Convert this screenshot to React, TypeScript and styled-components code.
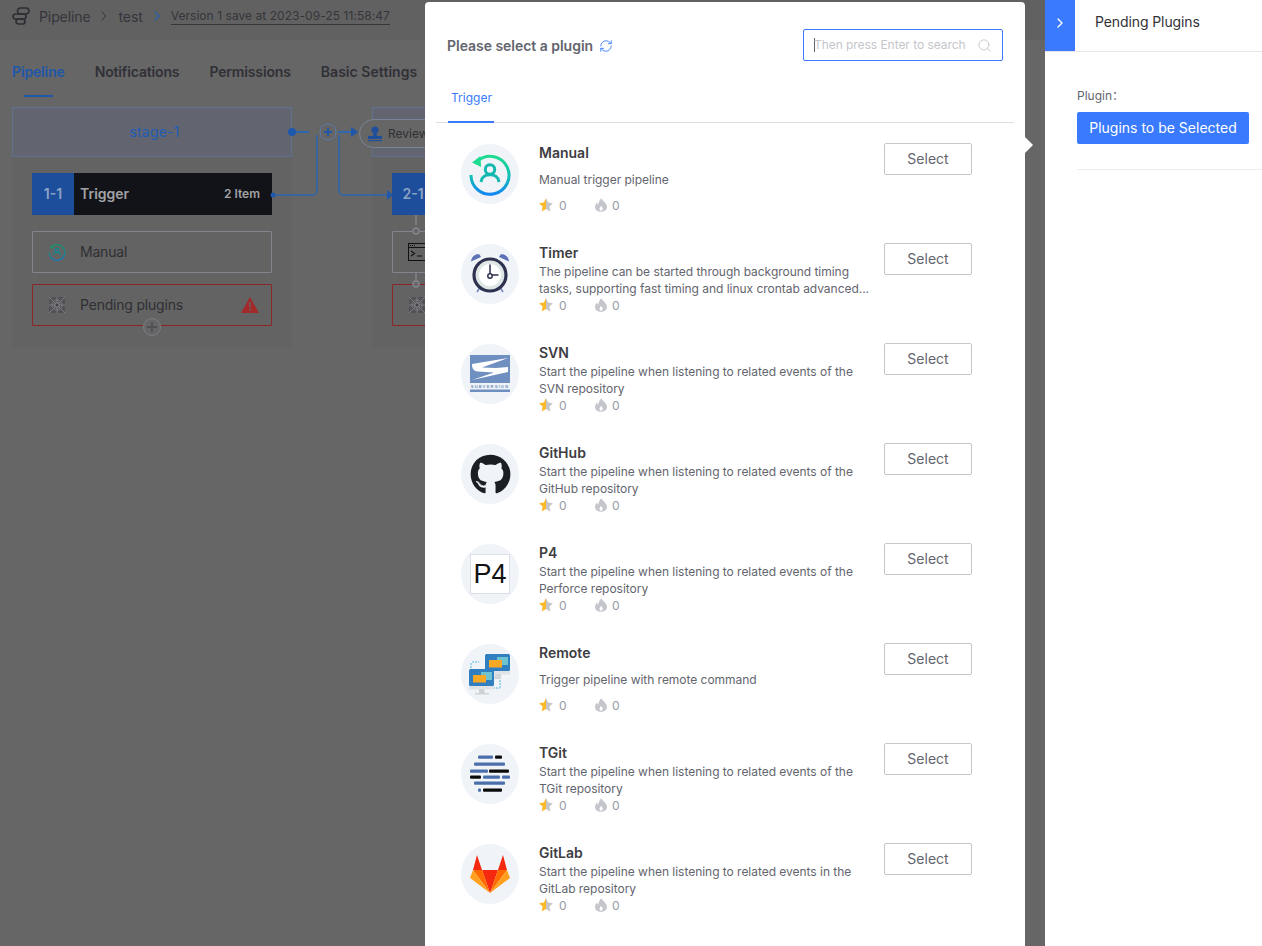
import React from "react";
import styled, { createGlobalStyle } from "styled-components";
import { FaGithub } from "react-icons/fa";
import { ChevronRight, RefreshCw, Search } from "lucide-react";

const GlobalStyle = createGlobalStyle`
  html, body {
    margin: 0;
    height: 100%;
    background: #666;
    overflow: hidden;
    font-family: Inter, "Noto Sans", "Liberation Sans", sans-serif;
  }
  * { box-sizing: border-box; }
`;

const Screen = styled.div`
  position: relative;
  width: 100vw;
  height: 100vh;
  overflow: hidden;
  background: #666;
`;

/* dimmed page behind the modal */
const TopBar = styled.div`
  display: flex;
  align-items: center;
  height: 40px;
  padding: 0 0 8px 12px;
  background: #616161;
  color: #35353b;
  font-size: 14px;
  letter-spacing: -0.1px;
`;
const Crumb = styled.span`
  margin-left: 9px;
`;
const Sep = styled.span<{ $blue?: boolean }>`
  display: flex;
  width: 28px;
  justify-content: center;
  color: ${(p) => (p.$blue ? "#2a5fae" : "#35353b")};
`;
const Version = styled.span`
  font-size: 12px;
  line-height: 16px;
  letter-spacing: 0.05px;
  color: #35353b;
  border-bottom: 1px solid #35353b;
`;
const Tabs = styled.div`
  display: flex;
  gap: 30px;
  height: 57px;
  padding: 21px 12px 0;
`;
const Tab = styled.div<{ $active?: boolean }>`
  position: relative;
  height: 36px;
  font-size: 14px;
  line-height: 22px;
  font-weight: 600;
  letter-spacing: -0.15px;
  color: ${(p) => (p.$active ? "#1f57ab" : "#303036")};
  &:last-child {
    letter-spacing: 0.05px;
  }
  ${(p) =>
    p.$active &&
    `&::after {
      content: "";
      position: absolute;
      left: 12px;
      right: 12px;
      bottom: 0;
      height: 2px;
      background: #1f57ab;
    }`}
`;
const Canvas = styled.div`
  position: relative;
  display: flex;
  gap: 80px;
  padding: 10px 12px;
`;
const Stage = styled.div`
  flex: none;
  width: 280px;
  height: 241px;
  background: #636363;
`;
const StageHead = styled.div`
  display: flex;
  align-items: center;
  justify-content: center;
  height: 50px;
  padding: 0 0 1px 5px;
  background: #62656f;
  border: 1px solid #60728e;
  color: #1f5cb8;
  font-size: 14px;
  letter-spacing: 0.2px;
`;
const Job = styled.div`
  padding: 16px 20px 0;
`;
const JobHead = styled.div`
  display: flex;
  align-items: center;
  height: 42px;
  background: #121318;
  color: #a3a3a6;
  font-size: 14px;
  font-weight: 600;
`;
const Seq = styled.div`
  display: flex;
  align-items: center;
  justify-content: center;
  width: 42px;
  height: 42px;
  margin-right: 6px;
  padding-bottom: 1px;
  background: #1d4e9c;
  color: #8da3c4;
`;
const JobName = styled.div`
  flex: 1;
  padding-bottom: 1px;
`;
const JobCount = styled.div`
  margin-right: 12px;
  padding-bottom: 2px;
  font-size: 12px;
`;
const Atom = styled.div<{ $error?: boolean }>`
  position: relative;
  display: flex;
  align-items: center;
  height: 42px;
  margin-top: ${(p) => (p.$error ? "11px" : "16px")};
  padding: 0 12px 0 15px;
  border: 1px solid ${(p) => (p.$error ? "#8c2626" : "#83848c")};
  border-radius: 1px;
  color: #2f2f34;
  font-size: 14px;
  letter-spacing: -0.2px;
`;
const AtomIcon = styled.span`
  display: flex;
  width: 18px;
  height: 18px;
  margin-right: 14px;
`;
const AtomName = styled.span`
  flex: 1;
  padding-bottom: 2px;
`;
const AddAtom = styled.div`
  position: absolute;
  left: 110px;
  bottom: -11px;
  display: flex;
  align-items: center;
  justify-content: center;
  width: 18px;
  height: 18px;
  border-radius: 50%;
  border: 1px solid #7c7d85;
  background: #666;
  color: #4f5056;
`;
const Wires = styled.svg`
  position: absolute;
  left: 0;
  top: 0;
  width: 425px;
  height: 260px;
  pointer-events: none;
`;
const Review = styled.div`
  position: absolute;
  left: 359px;
  top: 22px;
  display: flex;
  align-items: center;
  gap: 5px;
  width: 90px;
  height: 29px;
  padding-left: 7px;
  border: 1px solid #7a8496;
  border-radius: 15px;
  background: #666;
  color: #2f2f34;
  font-size: 12px;
`;

/* plugin picker */
const Modal = styled.div`
  position: absolute;
  left: 425px;
  top: 2px;
  bottom: 0;
  width: 600px;
  padding: 0 11px;
  background: #fff;
  border-radius: 4px 4px 0 0;
  &::after {
    content: "";
    position: absolute;
    right: -8px;
    top: 135px;
    border-left: 8px solid #fff;
    border-top: 8px solid transparent;
    border-bottom: 8px solid transparent;
  }
`;
const ModalHead = styled.div`
  display: flex;
  align-items: center;
  justify-content: space-between;
  height: 86px;
  padding: 1px 11px 0 11px;
`;
const Title = styled.div`
  display: flex;
  align-items: center;
  gap: 6px;
  color: #63656e;
  font-size: 14px;
  font-weight: 600;
  letter-spacing: -0.03px;
`;
const SearchBox = styled.div`
  position: relative;
  display: flex;
  align-items: center;
  width: 200px;
  height: 32px;
  margin-bottom: 2px;
  padding: 0 10px;
  border: 1px solid #3a7afe;
  border-radius: 2px;
  color: #c4c6cc;
  font-size: 12px;
  letter-spacing: -0.05px;
`;
const Caret = styled.span`
  width: 1px;
  height: 14px;
  margin-right: -1px;
  background: #63656e;
`;
const SearchIcon = styled(Search)`
  position: absolute;
  right: 10px;
  top: 8px;
`;
const TabBar = styled.div`
  display: flex;
  height: 35px;
  border-bottom: 1px solid #dcdee5;
  padding-left: 12px;
`;
const PluginTab = styled.div`
  width: 46px;
  height: 35px;
  padding-left: 3px;
  border-bottom: 2px solid #3a7afe;
  color: #3a7afe;
  font-size: 12px;
  line-height: 20px;
`;
const Row = styled.div`
  display: flex;
  height: 100px;
  padding: 20px 0 0 25px;
`;
const Logo = styled.div`
  flex: none;
  display: flex;
  align-items: center;
  justify-content: center;
  width: 58px;
  height: 60px;
  margin: 1px 20px 0 0;
  border-radius: 50%;
  background: #f0f4f8;
`;
const Info = styled.div`
  width: 335px;
`;
const Name = styled.div`
  height: 20px;
  color: #3d3d42;
  font-size: 14px;
  font-weight: 600;
  line-height: 20px;
`;
const DescWrap = styled.div`
  display: flex;
  align-items: center;
  height: 34px;
`;
const Desc = styled.div<{ $short?: boolean }>`
  margin-bottom: ${(p) => (p.$short ? "2px" : "0")};
  color: #63656e;
  font-size: 12px;
  line-height: 17px;
  letter-spacing: -0.03px;
`;
const Rates = styled.div`
  display: flex;
  align-items: center;
  height: 17px;
  padding-bottom: 1px;
  color: #979ba5;
  font-size: 12px;
`;
const Rate = styled.span<{ $tight?: boolean }>`
  display: flex;
  align-items: center;
  gap: ${(p) => (p.$tight ? "4px" : "6px")};
  width: 55px;
`;
const SelectButton = styled.button`
  flex: none;
  width: 88px;
  height: 32px;
  margin-left: 10px;
  padding: 0 0 2px;
  background: #fff;
  border: 1px solid #c4c6cc;
  border-radius: 2px;
  color: #63656e;
  font: inherit;
  font-size: 14px;
`;

/* side panel */
const Side = styled.div`
  position: absolute;
  left: 1045px;
  top: 0;
  bottom: 0;
  right: 0;
  background: #fff;
`;
const SideHead = styled.div`
  display: flex;
  height: 52px;
  border-bottom: 1px solid #e6e7eb;
  color: #313238;
  font-size: 14px;
  line-height: 44px;
  letter-spacing: -0.1px;
`;
const SideToggle = styled.div`
  display: flex;
  align-items: center;
  justify-content: center;
  width: 30px;
  height: 51px;
  margin-right: 20px;
  padding-bottom: 6px;
  background: #3a7afe;
  color: #fff;
`;
const SideBody = styled.div`
  padding: 35px 0 0 32px;
`;
const Label = styled.div`
  color: #63656e;
  font-family: Inter, "Noto Sans CJK SC", sans-serif;
  font-size: 12px;
  line-height: 17px;
`;
const PrimaryButton = styled.button`
  display: block;
  width: 172px;
  height: 32px;
  margin-top: 8px;
  padding: 0 0 2px;
  background: #3a7afe;
  border: 0;
  border-radius: 2px;
  color: #fff;
  font: inherit;
  font-size: 14px;
`;
const SideRule = styled.div`
  height: 1px;
  margin-top: 25px;
  background: #ecedf0;
`;

const Star = () => (
  <svg width="14" height="14" viewBox="0 0 14 14">
    <path d="M7 0 9.100 4.600 14 5.200 10.400 8.600l1 5L7 11.100z" fill="#c4c6cc" />
    <path d="M7 0 4.900 4.600 0 5.200 3.600 8.600l-1 5L7 11.100z" fill="#fdb92c" />
  </svg>
);

const Fire = () => (
  <svg width="14" height="14" viewBox="0 0 14 14">
    <path
      d="M7.500.300c.6 2.600 5.500 4.800 5.500 8.700 0 3-2.600 4.800-6 4.800S1 12 1 9c0-2 1-3.600 2.200-4.600.1 1.100.4 1.800 1.100 2.300C4.400 4.400 5.700 1.900 7.500.3zM7.100 8C6.200 9 5.500 10 5.500 11c0 1 .7 1.700 1.600 1.700S8.700 12 8.700 11c0-1-.7-2-1.600-3z"
      fill="#c4c6cc"
      fillRule="evenodd"
    />
  </svg>
);

const ManualIcon = ({ size = 44, mono = false }: { size?: number; mono?: boolean }) => (
  <svg width={size} height={size} viewBox="0 0 44 44">
    <defs>
      <linearGradient id={mono ? "manualDim" : "manualGrad"} x1="0" y1="0" x2="0" y2="1">
        <stop offset="0" stopColor={mono ? "#17966a" : "#1edb8f"} />
        <stop offset="0.55" stopColor={mono ? "#128a90" : "#13bdb8"} />
        <stop offset="1" stopColor={mono ? "#1a78bc" : "#1286f2"} />
      </linearGradient>
    </defs>
    <path
      d="M10 8.500A19 19 0 1 1 3 23"
      fill="none"
      stroke={`url(#${mono ? "manualDim" : "manualGrad"})`}
      strokeWidth="3"
    />
    <polygon points="4,10.500 12.500,4 13,15" fill={mono ? "#17966a" : "#1edb8f"} />
    <circle cx="22" cy="17.500" r="4.700" fill="none" stroke={mono ? "#128a90" : "#14b8b0"} strokeWidth="3" />
    <path
      d="M13 30c.5-5 4.500-7.300 9-7.300s8.500 2.300 9 7.300"
      fill="none"
      stroke={mono ? "#128a90" : "#14b8b0"}
      strokeWidth="3"
    />
  </svg>
);

const TimerIcon = () => (
  <svg width="42" height="42" viewBox="0 0 42 42">
    <path d="M2 8.500C2.500 3.500 6.500 .5 10.500 1.500l1.500 2.500z" fill="#5b72b4" />
    <path d="M40 8.500C39.500 3.500 35.500 .5 31.500 1.500l-1.500 2.500z" fill="#5b72b4" />
    <path d="M10.500 35l-2.500 4M31.500 35l2.500 4" stroke="#6d84c0" strokeWidth="1.500" />
    <circle cx="21" cy="22" r="16" fill="#dfe6e6" stroke="#2e3150" strokeWidth="3.200" />
    <circle cx="21" cy="22" r="11" fill="#fff" />
    <path d="M21 11.500V22h8.500" fill="none" stroke="#2e3150" strokeWidth="1.500" />
    <circle cx="21" cy="23" r="2.200" fill="#fff" stroke="#2e3150" strokeWidth="1.500" />
  </svg>
);

const SvnIcon = () => (
  <svg width="40" height="40" viewBox="0 0 40 40">
    <rect x="0" y="1" width="40" height="28" fill="#6f8fc0" />
    <path d="M2 10 38 4 12 13.500 26 14 38 13V18L2 26 24 18.500 8 17.500C3 17 2 14 2 10z" fill="#fff" />
    <text x="20" y="33.500" textAnchor="middle" fontSize="4" fontWeight="700" letterSpacing="1.200" fill="#6f8fc0" fontFamily="Liberation Sans, sans-serif">
      SUBVERSION
    </text>
    <rect x="0" y="35.500" width="40" height="2.500" fill="#6f8fc0" />
  </svg>
);

const P4Box = styled.div`
  display: flex;
  align-items: center;
  justify-content: center;
  width: 40px;
  height: 40px;
  background: #fff;
  border: 1px solid #dcdee5;
  color: #111;
  font-family: "Liberation Sans", sans-serif;
  font-size: 27px;
`;

const RemoteIcon = () => (
  <svg width="44" height="44" viewBox="0 0 44 44">
    <path d="M4 10h7M3 11v6M32 22v14M22 36h10" fill="none" stroke="#9fd7e8" strokeWidth="2" strokeDasharray="2 1" />
    <rect x="17" y="2" width="25" height="17" rx="1.500" fill="#2f7fc1" />
    <rect x="17" y="19" width="25" height="3.500" fill="#dfe3e6" />
    <path d="M27 22h5l1 5h-7z" fill="#d3d7da" />
    <rect x="29" y="5" width="11" height="8" fill="#6fc3cf" />
    <rect x="21" y="8" width="13" height="7.500" fill="#f9a825" />
    <rect x="1" y="17" width="25" height="17" rx="1.500" fill="#2f7fc1" />
    <rect x="1" y="34" width="25" height="3.500" fill="#dfe3e6" />
    <path d="M11 37h5l1 4h4v1.500H7V41h4z" fill="#cfd3d6" />
    <rect x="13" y="20" width="11" height="8" fill="#6fc3cf" />
    <rect x="5" y="23" width="13" height="7.500" fill="#f9a825" />
  </svg>
);

const TGitIcon = () => (
  <svg width="40" height="40" viewBox="0 0 40 40">
    <g fill="#4a6ea9">
      <rect x="8" y="1.500" width="15" height="3.200" rx="1" />
      <rect x="4" y="8.500" width="31" height="3.200" rx="1" />
      <rect x="0" y="15.500" width="18" height="3.200" rx="1" />
      <rect x="13" y="21.500" width="17" height="3.200" rx="1" />
      <rect x="32" y="21.500" width="8" height="3.200" rx="1" />
      <rect x="4" y="27.500" width="31" height="3.200" rx="1" />
      <rect x="8" y="34.500" width="3" height="3.200" rx="1" />
    </g>
    <g fill="#0a0a0a">
      <rect x="25" y="1.500" width="7" height="3.200" rx="1" />
      <rect x="19" y="15.500" width="20" height="3.200" rx="1" />
      <rect x="0" y="21.500" width="11" height="3.200" rx="1" />
      <rect x="13" y="34.500" width="19" height="3.200" rx="1" />
    </g>
  </svg>
);

const GitLabIcon = () => (
  <svg width="40" height="40" viewBox="0 0 40 40">
    <polygon points="20,39 28,16 12,16" fill="#f5290f" />
    <polygon points="20,39 12,16 3,16" fill="#ff6a00" />
    <polygon points="3,16 0,24 20,39" fill="#ffa01e" />
    <polygon points="3,16 12,16 7,1" fill="#f5290f" />
    <polygon points="20,39 28,16 37,16" fill="#ff6a00" />
    <polygon points="37,16 40,24 20,39" fill="#ffa01e" />
    <polygon points="37,16 28,16 33,1" fill="#f5290f" />
  </svg>
);

const Pending = () => (
  <svg width="18" height="18" viewBox="0 0 18 18">
    <rect x="1" y="1" width="16" height="16" rx="3" fill="#525257" />
    <g fill="none" stroke="#86868a" strokeWidth="0.800">
      <path d="M1 1l16 16M17 1 1 17M9 1v16M1 9h16" />
      <circle cx="9" cy="9" r="5" />
      <circle cx="9" cy="9" r="2.500" />
    </g>
    <circle cx="9" cy="9" r="1.200" fill="#3f3f44" />
  </svg>
);

const Warn = () => (
  <svg width="18" height="16" viewBox="0 0 18 16">
    <path d="M9 0l9 16H0z" fill="#a32a2a" />
    <path d="M8.200 5h1.600l-.3 6h-1zM8.200 12h1.600v1.600H8.200z" fill="#666" />
  </svg>
);

const Terminal = () => (
  <svg width="18" height="18" viewBox="0 0 18 18">
    <rect x=".5" y=".5" width="17" height="17" fill="none" stroke="#111" />
    <path d="M0 4.500h18" stroke="#111" />
    <path d="M2 2.500h1M4 2.500h1M6 2.500h1" stroke="#111" />
    <path d="M3 8l3.500 2.500L3 13M9 13h5" fill="none" stroke="#111" strokeWidth="1.200" />
  </svg>
);

const PipelineLogo = () => (
  <svg width="18" height="18" viewBox="0 0 18 18" fill="none" stroke="#2d2d33" strokeWidth="1.700">
    <rect x="5.500" y="1" width="11.500" height="6" rx="3" />
    <rect x="1" y="7" width="13" height="5" rx="2.500" />
    <rect x="4" y="12" width="9" height="5" rx="2.500" />
  </svg>
);

const Stamp = () => (
  <svg width="16" height="16" viewBox="0 0 16 16" fill="#1f4f9c">
    <circle cx="8" cy="4" r="3.500" />
    <path d="M6.500 7h3l.5 3H15v3H1v-3h5z" />
    <rect x="1" y="14" width="14" height="1.200" />
  </svg>
);

const Plus = () => (
  <svg width="10" height="10" viewBox="0 0 10 10">
    <path d="M5 0v10M0 5h10" stroke="currentColor" strokeWidth="1.800" />
  </svg>
);

const plugins: { name: string; desc: string; short?: boolean; logo: React.ReactNode }[] = [
  { name: "Manual", desc: "Manual trigger pipeline", short: true, logo: <ManualIcon /> },
  {
    name: "Timer",
    desc: "The pipeline can be started through background timing tasks, supporting fast timing and linux crontab advanced...",
    logo: <TimerIcon />,
  },
  {
    name: "SVN",
    desc: "Start the pipeline when listening to related events of the SVN repository",
    logo: <SvnIcon />,
  },
  {
    name: "GitHub",
    desc: "Start the pipeline when listening to related events of the GitHub repository",
    logo: <FaGithub size={41} color="#1b1f23" />,
  },
  {
    name: "P4",
    desc: "Start the pipeline when listening to related events of the Perforce repository",
    logo: <P4Box>P4</P4Box>,
  },
  { name: "Remote", desc: "Trigger pipeline with remote command", short: true, logo: <RemoteIcon /> },
  {
    name: "TGit",
    desc: "Start the pipeline when listening to related events of the TGit repository",
    logo: <TGitIcon />,
  },
  {
    name: "GitLab",
    desc: "Start the pipeline when listening to related events in the GitLab repository",
    logo: <GitLabIcon />,
  },
];

function App() {
  return (
    <Screen>
      <GlobalStyle />
      <TopBar>
        <PipelineLogo />
        <Crumb>Pipeline</Crumb>
        <Sep>
          <ChevronRight size={16} strokeWidth={1.5} />
        </Sep>
        <span>test</span>
        <Sep $blue>
          <ChevronRight size={16} strokeWidth={1.8} />
        </Sep>
        <Version>Version 1 save at 2023-09-25 11:58:47</Version>
      </TopBar>
      <Tabs>
        <Tab $active>Pipeline</Tab>
        <Tab>Notifications</Tab>
        <Tab>Permissions</Tab>
        <Tab>Basic Settings</Tab>
      </Tabs>
      <Canvas>
        <Stage>
          <StageHead>stage-1</StageHead>
          <Job>
            <JobHead>
              <Seq>1-1</Seq>
              <JobName>Trigger</JobName>
              <JobCount>2 Item</JobCount>
            </JobHead>
            <Atom>
              <AtomIcon>
                <ManualIcon size={18} mono />
              </AtomIcon>
              <AtomName>Manual</AtomName>
            </Atom>
            <Atom $error>
              <AtomIcon>
                <Pending />
              </AtomIcon>
              <AtomName>Pending plugins</AtomName>
              <Warn />
              <AddAtom>
                <Plus />
              </AddAtom>
            </Atom>
          </Job>
        </Stage>
        <Stage>
          <StageHead />
          <Job>
            <JobHead>
              <Seq>2-1</Seq>
            </JobHead>
            <Atom>
              <AtomIcon>
                <Terminal />
              </AtomIcon>
            </Atom>
            <Atom $error>
              <AtomIcon>
                <Pending />
              </AtomIcon>
            </Atom>
          </Job>
        </Stage>
        <Wires viewBox="0 0 425 260">
          <g fill="none" stroke="#2f66b0" strokeWidth="1.500">
            <path d="M292 35H309" strokeWidth="2" />
            <path d="M338 35H352" strokeWidth="2" />
            <path d="M273 98H313a4 4 0 0 0 4-4V38" />
            <path d="M339 38V94a4 4 0 0 0 4 4H388" />
          </g>
          <circle cx="292" cy="35" r="4" fill="#1f57ab" />
          <circle cx="273" cy="98" r="2.500" fill="#1f57ab" />
          <path d="M351 30l7 5-7 5z" fill="#1f57ab" />
          <path d="M387 93l6 5-6 5z" fill="#1f57ab" />
          <circle cx="328" cy="35" r="8" fill="#666" stroke="#5d7aa8" />
          <path d="M328 31v8M324 35h8" stroke="#1f57ab" strokeWidth="1.800" />
          <path d="M416 118v10M416 176v11" stroke="#83848c" strokeWidth="1.500" />
          <circle cx="416" cy="134" r="3" fill="#666" stroke="#83848c" strokeWidth="1.500" />
          <circle cx="416" cy="187" r="3" fill="#666" stroke="#83848c" strokeWidth="1.500" />
        </Wires>
        <Review>
          <Stamp />
          Review
        </Review>
      </Canvas>

      <Modal>
        <ModalHead>
          <Title>
            Please select a plugin
            <RefreshCw size={14} color="#3a7afe" strokeWidth={1.5} />
          </Title>
          <SearchBox>
            <Caret />
            Then press Enter to search
            <SearchIcon size={15} color="#c4c6cc" strokeWidth={1.5} />
          </SearchBox>
        </ModalHead>
        <TabBar>
          <PluginTab>Trigger</PluginTab>
        </TabBar>
        {plugins.map((plugin) => (
          <Row key={plugin.name}>
            <Logo>{plugin.logo}</Logo>
            <Info>
              <Name>{plugin.name}</Name>
              <DescWrap>
                <Desc $short={plugin.short}>{plugin.desc}</Desc>
              </DescWrap>
              <Rates>
                <Rate>
                  <Star />0
                </Rate>
                <Rate $tight>
                  <Fire />0
                </Rate>
              </Rates>
            </Info>
            <SelectButton>Select</SelectButton>
          </Row>
        ))}
      </Modal>

      <Side>
        <SideHead>
          <SideToggle>
            <ChevronRight size={16} strokeWidth={2} />
          </SideToggle>
          Pending Plugins
        </SideHead>
        <SideBody>
          <Label>Plugin：</Label>
          <PrimaryButton>Plugins to be Selected</PrimaryButton>
          <SideRule />
        </SideBody>
      </Side>
    </Screen>
  );
}

export default App;
